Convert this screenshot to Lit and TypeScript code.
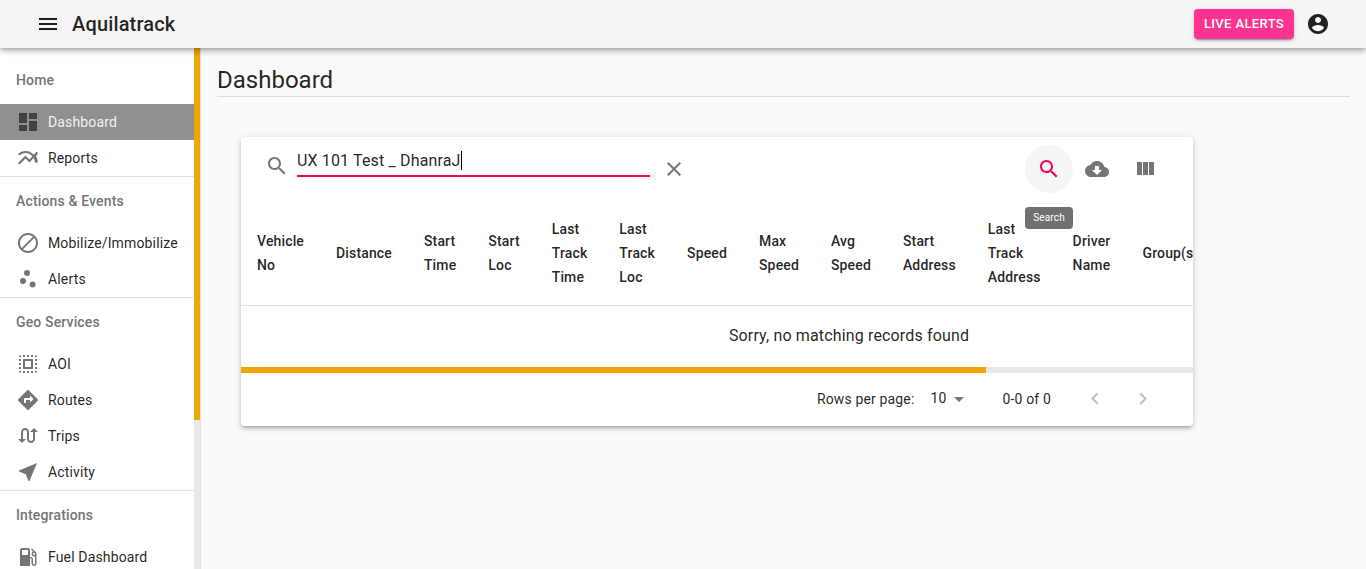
import { LitElement, html, css, svg } from 'lit';
import { customElement } from 'lit/decorators.js';

const icons: Record<string, unknown> = {
  menu: svg`<path d="M3 18h18v-2H3v2zm0-5h18v-2H3v2zm0-7v2h18V6H3z"/>`,
  dashboard: svg`<path d="M3 13h8V3H3v10zm0 8h8v-6H3v6zm10 0h8V11h-8v10zm0-18v6h8V3h-8z"/>`,
  reports: svg`<path d="M22 6.92l-1.41-1.41-2.85 3.21C15.68 6.4 12.83 5 9.61 5 6.72 5 4.07 6.16 2 8l1.42 1.42C5.12 7.93 7.27 7 9.61 7c2.74 0 5.09 1.26 6.77 3.24l-2.88 3.24-4-4L2 16.99l1.5 1.5 6-6.01 4 4 4.05-4.55c.75 1.35 1.25 2.9 1.44 4.55H22c-.22-2.3-.95-4.39-2.04-6.14L22 6.92z"/>`,
  block: svg`<path d="M12 2C6.48 2 2 6.48 2 12s4.48 10 10 10 10-4.48 10-10S17.52 2 12 2zM4 12c0-4.42 3.58-8 8-8 1.85 0 3.55.63 4.9 1.69L5.69 16.9C4.63 15.55 4 13.85 4 12zm8 8c-1.85 0-3.55-.63-4.9-1.69L18.31 7.1C19.37 8.45 20 10.15 20 12c0 4.42-3.58 8-8 8z"/>`,
  scatter: svg`<circle cx="7" cy="14" r="3"/><circle cx="11" cy="6" r="3"/><circle cx="16.6" cy="17.6" r="3"/>`,
  select: svg`<path d="M3 5h2V3c-1.1 0-2 .9-2 2zm0 8h2v-2H3v2zm4 8h2v-2H7v2zM3 9h2V7H3v2zm10-6h-2v2h2V3zm6 0v2h2c0-1.1-.9-2-2-2zM5 21v-2H3c0 1.1.9 2 2 2zm-2-4h2v-2H3v2zM9 3H7v2h2V3zm2 18h2v-2h-2v2zm8-8h2v-2h-2v2zm0 8c1.1 0 2-.9 2-2h-2v2zm0-12h2V7h-2v2zm0 8h2v-2h-2v2zm-4 4h2v-2h-2v2zm0-16h2V3h-2v2zM7 17h10V7H7v10zm2-8h6v6H9V9z"/>`,
  directions: svg`<path d="M21.71 11.29l-9-9c-.39-.39-1.02-.39-1.41 0l-9 9c-.39.39-.39 1.02 0 1.41l9 9c.39.39 1.02.39 1.41 0l9-9c.39-.38.39-1.01 0-1.41zM14 14.5V12h-4v3H8v-4c0-.55.45-1 1-1h5V7.5l3.5 3.5-3.5 3.5z"/>`,
  swap: svg`<path d="M18 4l-4 4h3v7c0 1.1-.9 2-2 2s-2-.9-2-2V8c0-2.21-1.79-4-4-4S5 5.79 5 8v7H2l4 4 4-4H7V8c0-1.1.9-2 2-2s2 .9 2 2v7c0 2.21 1.79 4 4 4s4-1.79 4-4V8h3l-4-4z"/>`,
  near: svg`<path d="M21 3L3 10.53v.98l6.84 2.65L12.48 21h.98L21 3z"/>`,
  gas: svg`<path d="M19.77 7.23l.01-.01-3.72-3.72L15 4.56l2.11 2.11c-.94.36-1.61 1.26-1.61 2.33 0 1.38 1.12 2.5 2.5 2.5.36 0 .69-.08 1-.21v7.21c0 .55-.45 1-1 1s-1-.45-1-1V14c0-1.1-.9-2-2-2h-1V5c0-1.1-.9-2-2-2H6c-1.1 0-2 .9-2 2v16h10v-7.5h1.5v5c0 1.38 1.12 2.5 2.5 2.5s2.5-1.12 2.5-2.5V9c0-.69-.28-1.32-.73-1.77zM12 10H6V5h6v5zm6 0c-.55 0-1-.45-1-1s.45-1 1-1 1 .45 1 1-.45 1-1 1z"/>`,
  search: svg`<path d="M15.5 14h-.79l-.28-.27C15.41 12.59 16 11.11 16 9.5 16 5.91 13.09 3 9.5 3S3 5.91 3 9.5 5.91 16 9.5 16c1.61 0 3.09-.59 4.23-1.57l.27.28v.79l5 4.99L20.49 19l-4.99-5zm-6 0C7.01 14 5 11.99 5 9.5S7.01 5 9.5 5 14 7.01 14 9.5 11.99 14 9.5 14z"/>`,
  cloud: svg`<path d="M19.35 10.04C18.67 6.59 15.64 4 12 4 9.11 4 6.6 5.64 5.35 8.04 2.34 8.36 0 10.91 0 14c0 3.31 2.69 6 6 6h13c2.76 0 5-2.24 5-5 0-2.64-2.05-4.78-4.65-4.96zM17 13l-5 5-5-5h3V9h4v4h3z"/>`,
  columns: svg`<path d="M10 18h5V5h-5v13zm-6 0h5V5H4v13zM16 5v13h5V5h-5z"/>`,
  clear: svg`<path d="M19 6.41L17.59 5 12 10.59 6.41 5 5 6.41 10.59 12 5 17.59 6.41 19 12 13.41 17.59 19 19 17.59 13.41 12z"/>`,
  account: svg`<path d="M12 2C6.48 2 2 6.48 2 12s4.48 10 10 10 10-4.48 10-10S17.52 2 12 2zm0 3c1.66 0 3 1.34 3 3s-1.34 3-3 3-3-1.34-3-3 1.34-3 3-3zm0 14.2c-2.5 0-4.71-1.28-6-3.22.03-1.99 4-3.08 6-3.08 1.99 0 5.97 1.09 6 3.08-1.29 1.94-3.5 3.22-6 3.22z"/>`,
  left: svg`<path d="M15.41 16.09l-4.58-4.59 4.58-4.59L14 5.5l-6 6 6 6z"/>`,
  right: svg`<path d="M8.59 16.34l4.58-4.59-4.58-4.59L10 5.75l6 6-6 6z"/>`,
  drop: svg`<path d="M7 10l5 5 5-5z"/>`,
};

const icon = (name: string) => html`<svg class="icon" viewBox="0 0 24 24" fill="currentColor">${icons[name]}</svg>`;

const nav = [
  { title: 'Home', items: [['dashboard', 'Dashboard', true], ['reports', 'Reports']] },
  { title: 'Actions & Events', items: [['block', 'Mobilize/Immobilize'], ['scatter', 'Alerts']] },
  { title: 'Geo Services', items: [['select', 'AOI'], ['directions', 'Routes'], ['swap', 'Trips'], ['near', 'Activity']] },
  { title: 'Integrations', items: [['gas', 'Fuel Dashboard']] },
];

const columns = [
  'Vehicle No', 'Distance', 'Start Time', 'Start Loc', 'Last Track Time', 'Last Track Loc', 'Speed',
  'Max Speed', 'Avg Speed', 'Start Address', 'Last Track Address', 'Driver Name', 'Group(s)',
];

@customElement('app-root')
export class AppRoot extends LitElement {
  static styles = css`
    :host {
      display: flex;
      flex-direction: column;
      height: 569px;
      overflow: hidden;
      font-family: Roboto, "Liberation Sans", sans-serif;
      font-size: 14px;
      letter-spacing: 0.01071em;
      color: rgba(0, 0, 0, 0.87);
      background: #fafafa;
    }

    .icon {
      display: block;
      width: 24px;
      height: 24px;
      flex: none;
    }

    .appbar {
      position: relative;
      z-index: 2;
      flex: none;
      height: 48px;
      display: flex;
      align-items: center;
      background: #f5f5f5;
      padding: 0 36px 0 36px;
      box-shadow: 0 2px 4px -1px rgba(0, 0, 0, 0.2), 0 4px 5px 0 rgba(0, 0, 0, 0.14), 0 1px 10px 0 rgba(0, 0, 0, 0.12);
    }

    .appbar h1 {
      margin: 0 0 0 12px;
      font-size: 20px;
      font-weight: 500;
      letter-spacing: 0.0075em;
      flex: 1;
    }

    .live {
      width: 100px;
      height: 30px;
      box-sizing: border-box;
      padding-bottom: 2px;
      display: flex;
      align-items: center;
      justify-content: center;
      margin-right: 12px;
      border-radius: 4px;
      background: #ff3390;
      color: #fff;
      font-size: 13px;
      font-weight: 500;
      letter-spacing: 0.02857em;
      box-shadow: 0 3px 1px -2px rgba(0, 0, 0, 0.2), 0 2px 2px 0 rgba(0, 0, 0, 0.14), 0 1px 5px 0 rgba(0, 0, 0, 0.12);
    }

    .body {
      flex: 1;
      min-height: 0;
      display: flex;
    }

    .side {
      flex: none;
      display: flex;
      background: #fff;
      border-right: 1px solid rgba(0, 0, 0, 0.12);
    }

    .nav {
      width: 194px;
      padding-top: 8px;
      overflow: hidden;
    }

    .vbar {
      width: 6px;
      background: #e8e8e8;
    }

    .vbar div {
      height: 372px;
      background: #efa600;
    }

    .group + .group {
      border-top: 1px solid rgba(0, 0, 0, 0.12);
    }

    .group h2 {
      margin: 0;
      height: 48px;
      line-height: 48px;
      padding-left: 16px;
      font-size: 14px;
      font-weight: 500;
      color: #757575;
    }

    .item {
      height: 36px;
      display: flex;
      align-items: center;
      gap: 8px;
      padding-left: 16px;
      color: rgba(0, 0, 0, 0.87);
    }

    .item .icon {
      color: #757575;
    }

    .item.on {
      background: #909090;
      color: #f2f2f2;
    }

    .item.on .icon {
      color: #424242;
    }

    main {
      flex: 1;
      min-width: 0;
      padding: 16px 16px 0;
    }

    .title {
      margin: 0;
      height: 32px;
      line-height: 32px;
      font-size: 24px;
      font-weight: 400;
      letter-spacing: 0;
      border-bottom: 1px solid rgba(0, 0, 0, 0.12);
    }

    .card {
      position: relative;
      width: 952px;
      margin: 40px 0 0 24px;
      background: #fff;
      border-radius: 4px;
      box-shadow: 0 3px 3px -2px rgba(0, 0, 0, 0.2), 0 3px 4px 0 rgba(0, 0, 0, 0.14), 0 1px 8px 0 rgba(0, 0, 0, 0.12);
    }

    .toolbar {
      height: 64px;
      display: flex;
      align-items: center;
      padding: 0 24px;
      box-sizing: border-box;
    }

    .toolbar > .icon {
      color: #757575;
      margin: -6px 8px 0 0;
    }

    .field {
      width: 353px;
      height: 26px;
      box-sizing: border-box;
      margin-top: -11px;
      border-bottom: 2px solid #f50057;
      font-size: 16px;
      line-height: 18px;
      letter-spacing: 0.00938em;
    }

    .caret {
      display: inline-block;
      width: 1px;
      height: 19px;
      vertical-align: -4px;
      background: #000;
    }

    .clear {
      color: #757575;
      margin-left: 12px;
    }

    .spacer {
      flex: 1;
    }

    .tool {
      width: 48px;
      height: 48px;
      display: flex;
      align-items: center;
      justify-content: center;
      border-radius: 50%;
      color: #757575;
    }

    .tool.on {
      background: #f5f5f5;
      color: #f50057;
    }

    .tip {
      position: absolute;
      left: 784px;
      top: 70px;
      width: 48px;
      height: 22px;
      line-height: 22px;
      text-align: center;
      border-radius: 4px;
      background: #707070;
      color: #fff;
      font-size: 10px;
    }

    .scroll {
      overflow: hidden;
    }

    table {
      width: 1216px;
      border-collapse: collapse;
    }

    th {
      padding: 16px;
      text-align: left;
      font-weight: 500;
      line-height: 24px;
      width: 0;
      border-bottom: 1px solid #e0e0e0;
    }

    th:last-child {
      width: 100%;
      white-space: nowrap;
    }

    td {
      height: 61px;
      padding: 0;
      box-sizing: border-box;
      text-align: center;
      font-size: 16px;
      line-height: 24px;
      letter-spacing: 0.00938em;
    }

    .hbar {
      height: 6px;
      background: #e8e8e8;
    }

    .hbar div {
      width: 745px;
      height: 6px;
      background: #efa600;
    }

    .pager {
      height: 53px;
      display: flex;
      align-items: center;
      justify-content: flex-end;
      padding-right: 26px;
    }

    .select {
      display: flex;
      align-items: center;
      margin: 0 32px 0 16px;
    }

    .select .icon {
      color: #757575;
    }

    .select span {
      margin-top: -2px;
    }

    .count {
      margin-right: 20px;
    }

    .page {
      width: 48px;
      height: 48px;
      display: flex;
      align-items: center;
      justify-content: center;
      color: rgba(0, 0, 0, 0.26);
    }
  `;

  render() {
    return html`
      <header class="appbar">
        ${icon('menu')}
        <h1>Aquilatrack</h1>
        <div class="live">LIVE ALERTS</div>
        ${icon('account')}
      </header>
      <div class="body">
        <aside class="side">
          <div class="nav">
            ${nav.map(g => html`
              <section class="group">
                <h2>${g.title}</h2>
                ${g.items.map(i => html`
                  <div class="item ${i[2] ? 'on' : ''}">${icon(i[0] as string)}<span>${i[1]}</span></div>
                `)}
              </section>
            `)}
          </div>
          <div class="vbar"><div></div></div>
        </aside>
        <main>
          <h2 class="title">Dashboard</h2>
          <div class="card">
            <div class="toolbar">
              ${icon('search')}
              <div class="field">UX 101 Test _ DhanraJ<span class="caret"></span></div>
              <div class="clear">${icon('clear')}</div>
              <div class="spacer"></div>
              <div class="tool on">${icon('search')}</div>
              <div class="tool">${icon('cloud')}</div>
              <div class="tool">${icon('columns')}</div>
            </div>
            <div class="scroll">
              <table>
                <thead><tr>${columns.map(c => html`<th>${c}</th>`)}</tr></thead>
                <tbody><tr><td colspan=${columns.length}>Sorry, no matching records found</td></tr></tbody>
              </table>
            </div>
            <div class="hbar"><div></div></div>
            <div class="pager">
              <span>Rows per page:</span>
              <div class="select"><span>10</span>${icon('drop')}</div>
              <span class="count">0-0 of 0</span>
              <div class="page">${icon('left')}</div>
              <div class="page">${icon('right')}</div>
            </div>
            <div class="tip">Search</div>
          </div>
        </main>
      </div>
    `;
  }
}
